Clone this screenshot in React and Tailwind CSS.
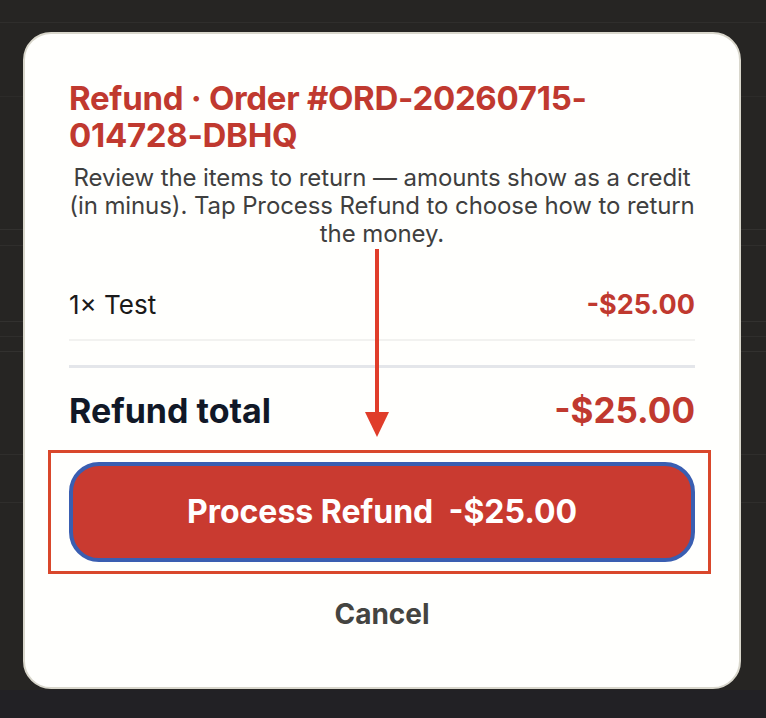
export default function App() {
  return (
    <div
      className="relative h-[718px] w-[766px] overflow-hidden bg-[#262523]"
      style={{ fontFamily: 'Inter, "Noto Sans", sans-serif' }}
    >
      {/* Background list rows */}
      <div className="absolute inset-0 flex flex-col">
        <div className="h-[23px] border-b border-[#2f2e2c]" />
        <div className="h-[74px] border-b border-[#2c2b29]" />
        <div className="h-[133px] border-b border-[#32312f]" />
        <div className="h-[16px] border-b border-[#2f2e2c]" />
        <div className="h-[76px] border-b border-[#32312f]" />
        <div className="h-[15px] border-b border-[#2f2e2c]" />
        <div className="h-[15px] border-b border-[#32312f]" />
        <div className="h-[103px] border-b border-[#2f2e2c]" />
        <div className="h-[48px] border-b border-[#2f2e2c]" />
        <div className="flex-1" />
        <div className="h-[28px] bg-[#222125]" />
      </div>

      {/* Modal */}
      <div className="absolute left-[23px] top-[32px] flex h-[657px] w-[718px] flex-col rounded-[28px] border-2 border-[#d9d7cc] bg-[#fffffd] px-[44px] pt-[46px]">
        <h1 className="text-[33px] font-bold leading-[37px] tracking-[-0.3px] text-[#c0392f]">
          Refund · Order #ORD-20260715-014728-DBHQ
        </h1>
        <p className="-mx-[6px] mt-[10px] text-center text-[24px] leading-[28px] tracking-[-0.1px] text-[#3f3f3f]">
          Review the items to return — amounts show as a credit (in minus). Tap Process Refund to choose how to return the money.
        </p>

        <div className="mt-[41px] flex items-center justify-between border-b-2 border-[#f2f2f0] pb-[18px]">
          <span className="text-[26px] leading-[32px] text-[#1a1a1a]">1× Test</span>
          <span className="text-[27px] font-bold leading-[32px] text-[#c0392f]">-$25.00</span>
        </div>

        <div className="mt-[24px] h-[3px] bg-[#e4e6ea]" />

        <div className="mt-[22px] flex h-[40px] items-center justify-between">
          <span className="text-[34px] font-bold text-[#111827]">Refund total</span>
          <span className="text-[35px] font-bold text-[#c0392f]">-$25.00</span>
        </div>

        <button className="mt-[32px] flex h-[100px] w-full items-center justify-center rounded-[30px] border-[4px] border-[#3a5eb1] bg-[#c93a30] text-[32px] font-bold text-white">
          Process Refund&nbsp;&nbsp;-$25.00
        </button>

        <button className="mt-[34px] self-center text-[28px] font-bold leading-[36px] text-[#444441]">Cancel</button>
      </div>

      {/* Annotation: rectangle around the button */}
      <div className="absolute left-[48px] top-[450px] h-[124px] w-[663px] border-[3px] border-[#d9472b]" />

      {/* Annotation: arrow */}
      <svg className="absolute left-[364px] top-[247px]" width="26" height="192" viewBox="0 0 26 192">
        <line x1="13" y1="2" x2="13" y2="168" stroke="#e03d2a" strokeWidth="4" />
        <polygon points="1,165 25,165 13,190" fill="#e03d2a" />
      </svg>
    </div>
  );
}
